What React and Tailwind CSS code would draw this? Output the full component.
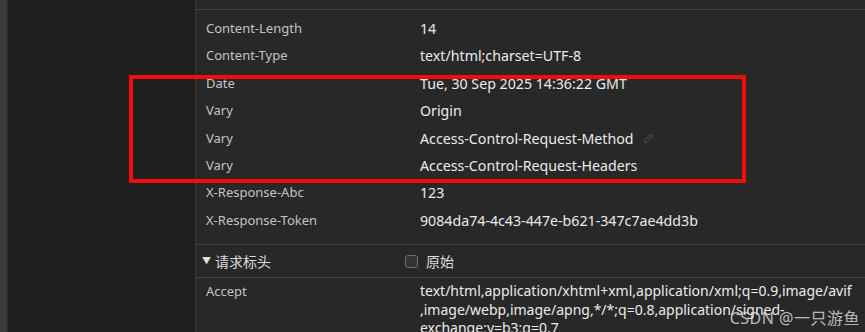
import React from 'react'

const rows = [
  ['Content-Length', '14'],
  ['Content-Type', 'text/html;charset=UTF-8'],
  ['Date', 'Tue, 30 Sep 2025 14:36:22 GMT'],
  ['Vary', 'Origin'],
  ['Vary', 'Access-Control-Request-Method', true],
  ['Vary', 'Access-Control-Request-Headers'],
  ['X-Response-Abc', '123'],
  ['X-Response-Token', '9084da74-4c43-447e-b621-347c7ae4dd3b'],
]

const font = { fontFamily: '"Noto Sans", "Noto Sans CJK SC", sans-serif' }

const Pencil = () => (
  <svg width="13" height="13" viewBox="0 0 16 16" fill="none" stroke="#4a4a4a" strokeWidth="1.3" className="ml-[8px]">
    <path d="M11 2.5l2.5 2.5L5.5 13H3v-2.5z" />
    <path d="M9.5 4l2.5 2.5" />
  </svg>
)

export default function App() {
  return (
    <div className="relative flex w-[865px] h-[332px] overflow-hidden bg-[#1f1f1f]" style={font}>
      <div className="w-[8px] shrink-0 bg-[#3a3a3a] border-r border-[#2c2c2c]" />
      <div className="w-[187px] shrink-0 bg-[#1f1f1f]" />
      <div className="flex-1 flex flex-col overflow-hidden bg-[#282828] border-l border-[#3c3c3c]">
        <div className="h-[10px] shrink-0 border-b border-[#444444]" />
        <div className="shrink-0 pt-[5px] pb-[10px] pl-[10px]">
          {rows.map(([k, v, pen], i) => (
            <div key={i} className="flex items-center h-[27.4px]">
              <div className="w-[214px] text-[13px] text-[#c4c4c4]">{k}</div>
              <div className="flex items-center text-[14.2px] text-[#ebebeb]">
                {v}
                {pen && <Pencil />}
              </div>
            </div>
          ))}
        </div>
        <div className="shrink-0 flex items-center h-[34px] border-t border-b border-[#444444] pl-[6px]">
          <div className="flex items-center w-[203px] text-[14px] text-[#dcdcdc]">
            <span className="text-[9px] mr-[4px] text-[#e0e0e0]">▼</span>
            请求标头
          </div>
          <div className="flex items-center text-[14px] text-[#dcdcdc]">
            <span className="w-[13px] h-[13px] rounded-[3px] border border-[#6e6e6e] bg-[#333333] mr-[8px]" />
            原始
          </div>
        </div>
        <div className="shrink-0 flex pl-[10px] pt-[4px]">
          <div className="w-[214px] text-[13px] text-[#c4c4c4] leading-[19px]">Accept</div>
          <div className="text-[14px] text-[#ebebeb] leading-[18.5px] whitespace-nowrap">
            text/html,application/xhtml+xml,application/xml;q=0.9,image/avif
            <br />
            ,image/webp,image/apng,*/*;q=0.8,application/signed-
            <br />
            exchange;v=b3;q=0.7
          </div>
        </div>
      </div>
      <div className="absolute left-[129px] top-[75px] w-[617px] h-[108px] border-[4px] border-[#f20d0d]" />
      <div className="absolute right-[5px] top-[306px] text-[16px] text-[#e0e0e0]/80 tracking-[0.5px]">
        CSDN @一只游鱼
      </div>
    </div>
  )
}
